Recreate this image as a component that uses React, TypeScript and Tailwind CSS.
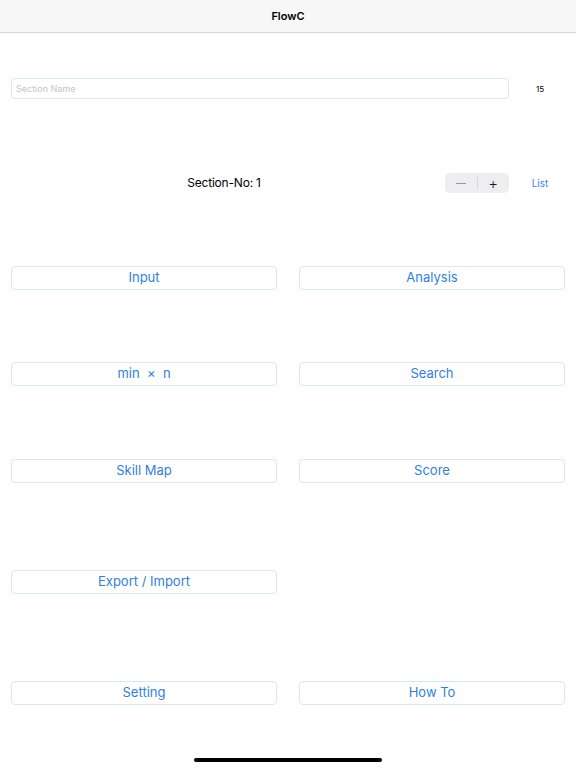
import React from 'react';

const font = { fontFamily: 'Inter, "Liberation Sans", sans-serif' };

const MenuButton: React.FC<{ label: string }> = ({ label }) => (
  <button className="h-6 w-full whitespace-pre rounded-[4px] border border-[#d3e9f8] bg-white text-[13px] text-[#2f7fe4]">
    {label}
  </button>
);

const App: React.FC = () => {
  return (
    <div className="relative flex h-[768px] w-[576px] flex-col bg-white text-black" style={font}>
      {/* Nav bar */}
      <div className="flex h-[33px] items-center justify-center border-b border-[#d8d8d8] bg-[#f7f7f7]">
        <span className="text-[11px] font-semibold">FlowC</span>
      </div>

      {/* Section name row */}
      <div className="mt-[45px] flex items-center pl-[11px] pr-[5px]">
        <input
          placeholder="Section Name"
          className="h-[21px] w-[498px] rounded-[4px] border border-[#d3e9f8] px-1 text-[9px] placeholder:text-[#c4c4c6] focus:outline-none"
        />
        <span className="w-[62px] text-center text-[8px]">15</span>
      </div>

      {/* Section number row */}
      <div className="mt-[74px] flex items-center pl-[11px] pr-[5px]">
        <span className="flex-1 text-center text-[12px] tracking-[-0.2px]">Section-No: 1</span>
        <div className="ml-2 flex h-5 w-16 items-center rounded-[5px] bg-[#eeeef0]">
          <button className="flex h-full flex-1 items-center justify-center">
            <span className="block h-px w-[10px] bg-[#9a9a9e]" />
          </button>
          <span className="h-3 w-px bg-[#d6d6d8]" />
          <button className="flex h-full flex-1 items-center justify-center text-[15px] font-light leading-none text-[#1c1c1e]">
            +
          </button>
        </div>
        <span className="w-[62px] text-center text-[10px] text-[#3a86e8]">List</span>
      </div>

      {/* Menu grid */}
      <div className="mt-[73px] grid grid-cols-2 gap-x-[22px] px-[11px]">
        <MenuButton label="Input" />
        <MenuButton label="Analysis" />
      </div>
      <div className="mt-[72px] grid grid-cols-2 gap-x-[22px] px-[11px]">
        <MenuButton label="min  ×  n" />
        <MenuButton label="Search" />
      </div>
      <div className="mt-[73px] grid grid-cols-2 gap-x-[22px] px-[11px]">
        <MenuButton label="Skill Map" />
        <MenuButton label="Score" />
      </div>
      <div className="mt-[87px] grid grid-cols-2 gap-x-[22px] px-[11px]">
        <MenuButton label="Export / Import" />
      </div>
      <div className="mt-[87px] grid grid-cols-2 gap-x-[22px] px-[11px]">
        <MenuButton label="Setting" />
        <MenuButton label="How To" />
      </div>

      {/* Home indicator */}
      <div className="mt-auto mb-[6px] flex justify-center">
        <div className="h-[4px] w-[188px] rounded-full bg-black" />
      </div>
    </div>
  );
};

export default App;
